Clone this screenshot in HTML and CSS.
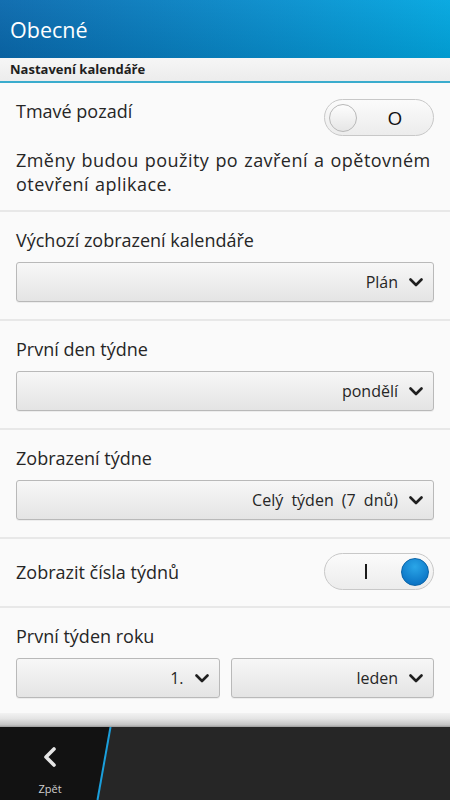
FILE: index.html
```html
<!DOCTYPE html>
<html lang="cs">
<head>
<meta charset="utf-8">
<title>Obecné</title>
<link rel="stylesheet" href="styles.css">
</head>
<body>
<div class="screen">
  <header class="titlebar"><h1 class="title">Obecné</h1></header>
  <div class="subheader">Nastavení kalendáře</div>
  <main class="content">
    <section class="section first">
      <div class="row top">
        <span class="label">Tmavé pozadí</span>
        <div class="toggle off"><span class="knob"></span><span class="tlabel o">O</span></div>
      </div>
      <p class="desc">Změny budou použity po zavření a opětovném otevření aplikace.</p>
    </section>
    <section class="section">
      <div class="label">Výchozí zobrazení kalendáře</div>
      <div class="dropdown"><span>Plán</span><svg class="chev" viewBox="0 0 14 9" width="14" height="9"><polyline points="1.5,1.5 7,7 12.5,1.5"/></svg></div>
    </section>
    <section class="section">
      <div class="label">První den týdne</div>
      <div class="dropdown"><span>pondělí</span><svg class="chev" viewBox="0 0 14 9" width="14" height="9"><polyline points="1.5,1.5 7,7 12.5,1.5"/></svg></div>
    </section>
    <section class="section">
      <div class="label">Zobrazení týdne</div>
      <div class="dropdown"><span>Celý týden (7 dnů)</span><svg class="chev" viewBox="0 0 14 9" width="14" height="9"><polyline points="1.5,1.5 7,7 12.5,1.5"/></svg></div>
    </section>
    <section class="section toggle-sec">
      <div class="row mid">
        <span class="label">Zobrazit čísla týdnů</span>
        <div class="toggle on"><span class="tlabel i"></span><span class="knob"></span></div>
      </div>
    </section>
    <section class="section last">
      <div class="label">První týden roku</div>
      <div class="pair">
        <div class="dropdown"><span>1.</span><svg class="chev" viewBox="0 0 14 9" width="14" height="9"><polyline points="1.5,1.5 7,7 12.5,1.5"/></svg></div>
        <div class="dropdown"><span>leden</span><svg class="chev" viewBox="0 0 14 9" width="14" height="9"><polyline points="1.5,1.5 7,7 12.5,1.5"/></svg></div>
      </div>
    </section>
  </main>
  <div class="shadow"></div>
  <footer class="actionbar">
    <svg class="slant" width="450" height="73" viewBox="0 0 450 73">
      <polygon points="0,0 110,0 97,73 0,73" fill="#121212"/>
      <line x1="110.5" y1="0" x2="97.5" y2="73" stroke="#1a9fdc" stroke-width="2"/>
    </svg>
    <div class="back">
      <svg width="14" height="20" viewBox="0 0 14 20"><polyline points="11,2 3,10 11,18" fill="none" stroke="#e6e6e6" stroke-width="3.6" stroke-linecap="round" stroke-linejoin="round"/></svg>
      <span class="backlabel">Zpět</span>
    </div>
  </footer>
</div>
</body>
</html>
```
FILE: styles.css
```css
* { box-sizing: border-box; }
html, body { margin: 0; padding: 0; }
body {
  font-family: "Open Sans", "Liberation Sans", sans-serif;
  color: #262626;
  background: #fafafa;
}
.screen {
  width: 450px;
  height: 800px;
  display: flex;
  flex-direction: column;
  overflow: hidden;
}
.titlebar {
  height: 58px;
  flex: none;
  background: linear-gradient(to bottom, rgba(255,255,255,0.04), rgba(0,0,0,0.08)),
              linear-gradient(to right, #0a69ad, #088dcc 60%, #02a7e0);
  display: flex;
  align-items: center;
  padding: 0 10px;
}
.title {
  margin: 0;
  font-weight: 400;
  font-size: 21.5px;
  color: #fff;
  line-height: 1;
  margin-top: 2px;
}
.subheader {
  height: 25px;
  flex: none;
  background: linear-gradient(#f6f6f6, #ececec);
  border-bottom: 2px solid #3aaccd;
  font-weight: 700;
  font-size: 13px;
  padding: 0 10px;
  line-height: 23px;
  color: #1e1e1e;
}
.content {
  flex: 1;
  overflow: hidden;
  background: #fafafa;
}
.section {
  padding: 16px 16px 17px;
  border-bottom: 2px solid #e8e8e8;
  display: flex;
  flex-direction: column;
}
.section.first { padding-bottom: 14px; }
.section.toggle-sec { padding: 14px 16px 16px; }
.section.last { border-bottom: none; }
.label {
  font-size: 18px;
  line-height: 24px;
}
.row {
  display: flex;
  justify-content: space-between;
}
.row.top { align-items: flex-start; }
.row.mid { align-items: center; }
.desc {
  margin: 12px -8px 0 0;
  font-size: 18px;
  line-height: 24px;
  letter-spacing: 0.45px;
  word-spacing: 1px;
}
.dropdown {
  margin-top: 10px;
  height: 40px;
  border: 1px solid #b9b9b9;
  border-radius: 3px;
  background: linear-gradient(#f7f7f7, #e4e4e4);
  display: flex;
  align-items: center;
  justify-content: flex-end;
  gap: 11px;
  padding: 0 10px;
  font-size: 16px;
  word-spacing: 4px;
  box-shadow: 0 1px 0 rgba(0,0,0,0.05);
}
.chev polyline {
  fill: none;
  stroke: #1f1f1f;
  stroke-width: 2.6;
  stroke-linecap: round;
  stroke-linejoin: round;
}
.pair {
  display: grid;
  grid-template-columns: 1fr 1fr;
  gap: 11px;
}
.toggle {
  width: 110px;
  height: 37px;
  border: 1px solid #c8c8c8;
  border-radius: 19px;
  background: linear-gradient(#fbfbfb, #ececec);
  display: flex;
  align-items: center;
  padding: 0 4px;
  flex: none;
}
.knob {
  width: 28px;
  height: 28px;
  border-radius: 50%;
  flex: none;
}
.toggle.off .knob {
  background: linear-gradient(#fdfdfd, #e6e6e6);
  border: 1px solid #b8b8b8;
}
.toggle.on .knob {
  background: radial-gradient(circle at 50% 30%, #2aa6e8, #0b73c4 80%);
  border: 1px solid #0a64a8;
}
.tlabel {
  flex: 1;
  display: flex;
  justify-content: center;
}
.tlabel.o {
  font-size: 19px;
  font-weight: 400;
  color: #111;
  padding-left: 4px;
}
.tlabel.i::before {
  content: "";
  width: 2.5px;
  height: 15px;
  background: #1a1a1a;
  margin-left: 2px;
}
.shadow {
  height: 14px;
  flex: none;
  background: linear-gradient(#f2f2f2, #e4e4e4 40%, #c4c4c4 85%, #9a9a9a);
}
.actionbar {
  height: 73px;
  flex: none;
  background: #262626;
  position: relative;
  display: flex;
}
.slant {
  position: absolute;
  left: 0;
  top: 0;
}
.back {
  position: relative;
  width: 100px;
  display: flex;
  flex-direction: column;
  align-items: center;
  padding-top: 20px;
}
.backlabel {
  font-size: 11px;
  color: #d0d0d0;
  margin-top: 15px;
  line-height: 14px;
}
```
